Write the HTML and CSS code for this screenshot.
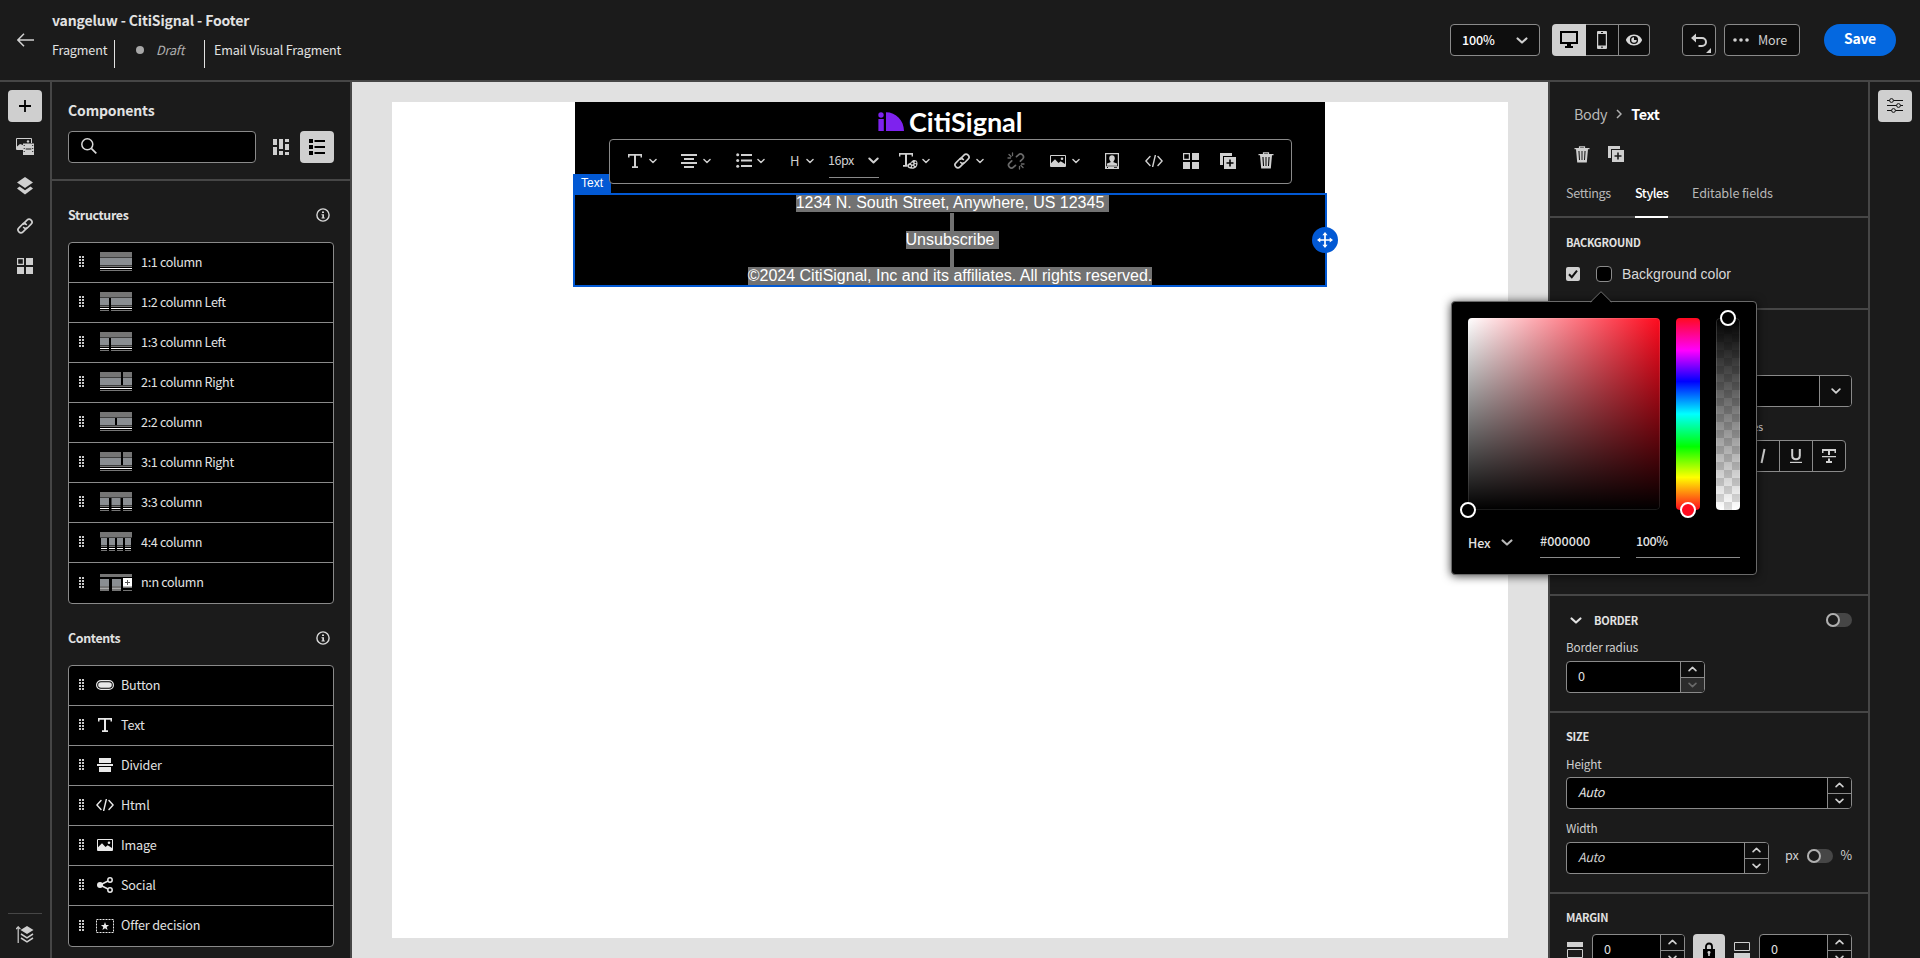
FILE: index.html
```html
<!DOCTYPE html>
<html lang="en">
<head>
<meta charset="utf-8">
<title>vangeluw - CitiSignal - Footer</title>
<link rel="stylesheet" href="styles.css">
</head>
<body>
<svg class="defs" width="0" height="0">
  <defs>
    <symbol id="handle" viewBox="0 0 5 11"><path fill="currentColor" d="M0 0h2v2H0zM3 0h2v2H3zM0 3h2v2H0zM3 3h2v2H3zM0 6h2v2H0zM3 6h2v2H3zM0 9h2v2H0zM3 9h2v2H3z"/></symbol>
    <symbol id="chev" viewBox="0 0 10 6"><path d="M1.2 1.2 5 4.8 8.800 1.200" fill="none" stroke="currentColor" stroke-width="1.8" stroke-linecap="round" stroke-linejoin="round"/></symbol>
    <symbol id="info" viewBox="0 0 14 14"><circle cx="7" cy="7" r="6.100" fill="none" stroke="currentColor" stroke-width="1.400"/><path d="M6 3.400h2v1.600H6zM5.500 6.200H8v3.200h.8v1H5.500v-1h.8V7.200h-.8z" fill="currentColor"/></symbol>
    <symbol id="link" viewBox="0 0 18 18"><g fill="none" stroke="currentColor" stroke-width="1.700" stroke-linecap="round"><path d="M7.300 6.900 11 3.100a2.900 2.900 0 0 1 4.100 0 2.900 2.900 0 0 1 0 4.100l-3.300 3.300a2.900 2.900 0 0 1-4.100 0"/><path d="M10.700 11.100 7 14.900a2.900 2.900 0 0 1-4.100 0 2.900 2.900 0 0 1 0-4.100l3.300-3.300a2.900 2.900 0 0 1 4.100 0"/></g></symbol>
    <symbol id="unlink" viewBox="0 0 18 18"><g fill="none" stroke="currentColor" stroke-width="1.700" stroke-linecap="round"><path d="M9.500 4.700 11.500 2.900a2.900 2.900 0 0 1 4.100 4.100l-2.200 2.200M8.500 13.300l-2 1.900a2.900 2.900 0 0 1-4.100-4.100l2.300-2.200"/><path stroke-width="1.300" d="M2 2.500 4 4.500M5.500 1v2.500M1 6h2.500M16 15.500l-2-2M12.500 17v-2.500M17 12h-2.500"/></g></symbol>
    <symbol id="grid4" viewBox="0 0 16 16"><path fill="currentColor" d="M9 0h7v7H9zM0 9h7v7H0zM9 9h7v7H9z"/><path d="M.6.600h5.800v5.800H.6z" fill="none" stroke="currentColor" stroke-width="1.200"/></symbol>
    <symbol id="image" viewBox="0 0 16 12"><path d="M.5.500h15v11H.5z" fill="none" stroke="currentColor"/><path fill="currentColor" d="M1 8.200 5 4.300 8.500 8l2.200-1.800L15 9v2.500H1z"/><circle cx="12" cy="3.700" r="1.300" fill="currentColor"/></symbol>
    <symbol id="code" viewBox="0 0 18 12"><path d="M5 1.600.9 6 5 10.400M13 1.600 17.100 6 13 10.400M10.300.500 7.700 11.500" fill="none" stroke="currentColor" stroke-width="1.400" stroke-linecap="round" stroke-linejoin="round"/></symbol>
    <symbol id="type" viewBox="0 0 14 14"><path fill="currentColor" d="M0 0h14v3.500h-1.500V1.800H8v10.400h2V14H4v-1.800h2V1.800H1.500v1.700H0z"/></symbol>
    <symbol id="trash" viewBox="0 0 16 17"><path d="M5.500 2V.800h5V2" fill="none" stroke="currentColor" stroke-width="1.200"/><path fill="currentColor" fill-rule="evenodd" d="M.5 2h15v1.200H14L12.800 16.500H3.200L2 3.200H.5zM4.400 5l.6 9h1l-.5-9zm3.100 0v9h1V5zm3 0-.5 9h1l.6-9z"/></symbol>
    <symbol id="copy" viewBox="0 0 16 16"><path fill="currentColor" d="M0 0h12v3H3v9H0z"/><path fill="currentColor" fill-rule="evenodd" d="M4 4h12v12H4zm5.200 2.500v2.700H6.500v1.600h2.700v2.700h1.600v-2.700h2.700V9.200h-2.700V6.500z"/></symbol>
    <symbol id="profile" viewBox="0 0 14 16"><path fill="currentColor" fill-rule="evenodd" d="M0 0h14v16H0zM1.200 1.200v12h11.600v-12zM2 14h1v1H2zm7 0h3v.7H9z"/><path fill="currentColor" d="M7 2.200c1.700 0 2.800 1.200 2.800 3 0 1.300-.6 2.400-1.300 3v1l3.500 1.300v2.200H2v-2.200l3.500-1.300v-1c-.7-.6-1.300-1.700-1.300-3 0-1.800 1.100-3 2.800-3z"/></symbol>
    <symbol id="s11" viewBox="0 0 32 19"><path fill="#757575" d="M0 0h32v5H0zM0 14h32v1H0zM0 18h32v1H0z"/><path fill="#3e3e3e" d="M0 5h32v1H0zM0 13h32v1H0z"/><path fill="#8a8e92" d="M0 6h32v7H0z"/><path fill="#fff" d="M0 16h32v1H0z"/></symbol>
  </defs>
</svg>

<div class="app">
  <header class="top">
    <svg class="back" width="17" height="14" viewBox="0 0 17 14"><path d="M7 .8.900 7 7 13.200M1 7h16" fill="none" stroke="#d0d0d0" stroke-width="1.500"/></svg>
    <div class="titles">
      <h1>vangeluw - CitiSignal - Footer</h1>
      <div class="meta"><span class="m1">Fragment</span><span class="m2"><i class="dot"></i><em>Draft</em></span><span class="m3">Email Visual Fragment</span></div>
    </div>
    <div class="tools">
      <div class="box zoom"><span>100%</span><svg width="12" height="7"><use href="#chev"/></svg></div>
      <div class="views">
        <div class="v on"><svg width="18" height="18" viewBox="0 0 18 18"><path fill="#000" fill-rule="evenodd" d="M0 0h18v13h-7v2h2v2H5v-2h2v-2H0zM2 2v9h14V2z"/></svg></div>
        <div class="v"><svg width="10" height="18" viewBox="0 0 10 18"><path fill="#d0d0d0" fill-rule="evenodd" d="M1 0h8q1 0 1 1v16q0 1-1 1H1q-1 0-1-1V1q0-1 1-1zM1.200 3v11.500h7.600V3zM4 1v1h2V1zm1 14.400a.8.800 0 1 0 .01 0z"/></svg></div>
        <div class="v"><svg width="16" height="12" viewBox="0 0 16 12"><path fill="#d8d8d8" fill-rule="evenodd" d="M8 .5c4.500 0 8 3.700 8 5.500s-3.500 5.500-8 5.500S0 7.800 0 6 3.500.500 8 .5zM8 1.900a4.100 4.100 0 1 0 0 8.200 4.100 4.100 0 0 0 0-8.200z"/><path fill="#d8d8d8" d="M8 3.300a2.700 2.700 0 1 0 2.700 2.700H8z"/></svg></div>
      </div>
      <div class="box undo"><svg width="22" height="20" viewBox="0 0 22 20"><path d="M3 5h9a4 4 0 0 1 0 8H8.500" fill="none" stroke="#d0d0d0" stroke-width="2"/><path fill="#d0d0d0" d="M1 5l5-4.500v9zM21 15v5h-5z"/></svg></div>
      <div class="box more"><svg width="16" height="4"><g fill="#d0d0d0"><circle cx="2" cy="2" r="1.800"/><circle cx="8" cy="2" r="1.800"/><circle cx="14" cy="2" r="1.800"/></g></svg><span>More</span></div>
      <div class="save">Save</div>
    </div>
  </header>

  <nav class="rail">
    <div class="rbtn"><svg width="12" height="12" viewBox="0 0 12 12"><path stroke="#000" stroke-width="1.800" d="M6 0v12M0 6h12"/></svg></div>
    <svg width="18" height="17" viewBox="0 0 18 17"><path fill="none" stroke="#cfcfcf" d="M6 11.500H.5V.500h15V5"/><path fill="#cfcfcf" d="M1 8.500 4 6l3 1v5H1z"/><circle cx="12" cy="3.400" r="1.200" fill="#cfcfcf"/><path fill="#cfcfcf" fill-rule="evenodd" d="M7 5.500h11V17H7zM7.700 7v1h1V7zm0 3v1h1v-1zm0 3v1h1v-1zM16.200 7v1h1V7zm0 3v1h1v-1zm0 3v1h1v-1zM9.700 10.500v1h5.600v-1z"/></svg>
    <svg width="16" height="18" viewBox="0 0 16 18"><path fill="#cfcfcf" d="M8 0l8 5.500-8 5.500-8-5.500zM2.500 9.500 8 13.200l5.500-3.700L16 11.500 8 17.500 0 11.500z"/></svg>
    <svg class="lt" width="18" height="18"><use href="#link"/></svg>
    <svg class="lt" width="16" height="16"><use href="#grid4"/></svg>
    <div class="railfoot"><svg width="18" height="18" viewBox="0 0 18 18"><path d="M2.200 2v15M0 3.200l2.200-2.400 2.200 2.400" fill="none" stroke="#cfcfcf" stroke-width="1.200"/><path fill="#cfcfcf" d="M11 0l6.500 4-6.500 4-6.500-4z"/><path fill="none" stroke="#cfcfcf" stroke-width="1.500" d="M5 8l6 3.800L17 8M5 12l6 3.800 6-3.800"/></svg></div>
  </nav>

  <aside class="left">
    <div class="lhead">
      <h2>Components</h2>
      <div class="srow">
        <div class="search"><svg width="16" height="16" viewBox="0 0 16 16"><circle cx="6.300" cy="6.300" r="5.500" fill="none" stroke="#d8d8d8" stroke-width="1.500"/><path d="M10.300 10.300 15.300 15.300" stroke="#d8d8d8" stroke-width="1.700"/></svg></div>
        <svg class="gal" width="16" height="16" viewBox="0 0 16 16"><path fill="#cfcfcf" d="M0 0h4v6H0zM0 8h4v8H0zM6 0h4v10H6zM6 12h4v4H6zM12 0h4v3h-4zM12 5h4v6h-4zM12 13h4v3h-4z"/></svg>
        <div class="lbtn"><svg width="16" height="16" viewBox="0 0 16 16"><path fill="#000" d="M0 0h4v4H0zM0 6h4v4H0zM0 12h4v4H0zM5.500 1H16v2H5.500zM5.500 7H16v2H5.500zM5.500 13H16v2H5.500z"/></svg></div>
      </div>
    </div>
    <div class="lsec"><h3>Structures</h3><svg width="14" height="14"><use href="#info"/></svg></div>
    <div class="list st">
      <div class="row"><svg class="h"><use href="#handle"/></svg><svg class="s" viewBox="0 0 32 19"><use href="#s11"/></svg><span class="nm">1:1 column</span></div>
      <div class="row"><svg class="h"><use href="#handle"/></svg><svg class="s" viewBox="0 0 32 19"><use href="#s11"/><path d="M9 6h2v13H9z"/></svg><span class="nm">1:2 column Left</span></div>
      <div class="row"><svg class="h"><use href="#handle"/></svg><svg class="s" viewBox="0 0 32 19"><use href="#s11"/><path d="M9 6h2v13H9z"/></svg><span class="nm">1:3 column Left</span></div>
      <div class="row"><svg class="h"><use href="#handle"/></svg><svg class="s" viewBox="0 0 32 19"><use href="#s11"/><path d="M21 0h2v13h-2z"/></svg><span class="nm">2:1 column Right</span></div>
      <div class="row"><svg class="h"><use href="#handle"/></svg><svg class="s" viewBox="0 0 32 19"><use href="#s11"/><path d="M15 6h2v7h-2z"/></svg><span class="nm">2:2 column</span></div>
      <div class="row"><svg class="h"><use href="#handle"/></svg><svg class="s" viewBox="0 0 32 19"><use href="#s11"/><path d="M21 0h2v13h-2z"/></svg><span class="nm">3:1 column Right</span></div>
      <div class="row"><svg class="h"><use href="#handle"/></svg><svg class="s" viewBox="0 0 32 19"><use href="#s11"/><path d="M9 6h2.500v13H9zM20.500 6H23v13h-2.500z"/></svg><span class="nm">3:3 column</span></div>
      <div class="row"><svg class="h"><use href="#handle"/></svg><svg class="s" viewBox="0 0 32 19"><use href="#s11"/><path d="M0 6h1v13H0zM7 6h2v13H7zM15 6h2v13h-2zM23 6h2v13h-2zM31 6h1v13h-1z"/></svg><span class="nm">4:4 column</span></div>
      <div class="row"><svg class="h"><use href="#handle"/></svg><svg class="s" viewBox="0 0 32 19"><path fill="#757575" d="M0 1h32v3H0zM0 12h9v5H0zM12 12h9v5h-9zM23 13h9v2h-9zM23 17h9v1h-9zM0 17h9v1H0zM12 17h9v1h-9z"/><path fill="#8a8e92" d="M0 6h9v7H0zM12 6h9v7h-9z"/><path fill="#fff" d="M23 5h9v8.500h-9z"/><path stroke="#555" d="M27.500 7v5M25 9.500h5"/><path fill="#aaa" d="M0 15h9v1H0zM12 15h9v1h-9z"/></svg><span class="nm">n:n column</span></div>
    </div>
    <div class="lsec"><h3>Contents</h3><svg width="14" height="14"><use href="#info"/></svg></div>
    <div class="list ct">
      <div class="row"><svg class="h"><use href="#handle"/></svg><span class="ic"><svg width="18" height="10" viewBox="0 0 18 10"><rect x=".6" y=".6" width="16.800" height="8.800" rx="4.400" fill="none" stroke="#e8e8e8" stroke-width="1.200"/><rect x="2.200" y="2.200" width="13.600" height="5.600" rx="2.800" fill="#e8e8e8"/></svg></span><span class="nm">Button</span></div>
      <div class="row"><svg class="h"><use href="#handle"/></svg><span class="ic"><svg width="14" height="14"><use href="#type"/></svg></span><span class="nm">Text</span></div>
      <div class="row"><svg class="h"><use href="#handle"/></svg><span class="ic"><svg width="16" height="14" viewBox="0 0 16 14"><path fill="#e8e8e8" d="M2 0h12v5H2zM0 6h16v2H0zM2 9h12v5H2z"/></svg></span><span class="nm">Divider</span></div>
      <div class="row"><svg class="h"><use href="#handle"/></svg><span class="ic"><svg width="18" height="12"><use href="#code"/></svg></span><span class="nm">Html</span></div>
      <div class="row"><svg class="h"><use href="#handle"/></svg><span class="ic"><svg width="16" height="12"><use href="#image"/></svg></span><span class="nm">Image</span></div>
      <div class="row"><svg class="h"><use href="#handle"/></svg><span class="ic"><svg width="16" height="16" viewBox="0 0 16 16"><circle cx="3" cy="8" r="3" fill="#e8e8e8"/><g fill="none" stroke="#e8e8e8" stroke-width="1.500"><circle cx="13" cy="3" r="2.200"/><circle cx="13" cy="13" r="2.200"/><path d="M3 8l8-4M3 8l8 4"/></g></svg></span><span class="nm">Social</span></div>
      <div class="row"><svg class="h"><use href="#handle"/></svg><span class="ic"><svg width="18" height="14" viewBox="0 0 18 14"><path d="M.5.500h17v13H.5z" fill="none" stroke="#e8e8e8" stroke-dasharray="2 1"/><path fill="#e8e8e8" d="M9 3l1.100 2.900 3 .1-2.400 1.900.9 3L9 9.200l-2.600 1.700.9-3L4.900 6l3-.1z"/></svg></span><span class="nm">Offer decision</span></div>
    </div>
  </aside>

  <main class="canvas">
    <div class="page">
      <div class="mail">
        <div class="logo"><svg width="26" height="19" viewBox="0 0 26 19"><g fill="#7e22ee"><circle cx="3" cy="3" r="2.700"/><path d="M.4 7h5.400v12H.4zM8 .3C18 .3 26 8.500 26 19H8z"/></g></svg><span>CitiSignal</span></div>
        <div class="textblock">
          <span class="tag">Text</span>
          <p class="first"><mark class="nl">1234 N. South Street, Anywhere, US 12345</mark></p>
          <p><mark class="empty"></mark></p>
          <p><mark class="nl">Unsubscribe</mark></p>
          <p><mark class="empty"></mark></p>
          <p><mark>©2024 CitiSignal, Inc and its affiliates. All rights reserved.</mark></p>
          <svg class="move" width="26" height="26" viewBox="0 0 26 26"><circle cx="13" cy="13" r="13" fill="#0259d4"/><path d="M13 7v12M7 13h12" stroke="#fff" stroke-width="1.700"/><path fill="#fff" d="M13 5l2.600 3.300h-5.200zM13 21l2.600-3.300h-5.200zM5 13l3.300-2.600v5.200zM21 13l-3.300-2.600v5.200z"/></svg>
        </div>
        <div class="bar">
          <span class="t t1"><svg width="14" height="14"><use href="#type"/></svg><svg class="c"><use href="#chev"/></svg></span>
          <span class="t t2"><svg width="16" height="14" viewBox="0 0 16 14"><path fill="currentColor" d="M0 0h16v2H0zM3 4h10v2H3zM0 8h16v2H0zM3 12h10v2H3z"/></svg><svg class="c"><use href="#chev"/></svg></span>
          <span class="t t3"><svg width="16" height="15" viewBox="0 0 16 15"><path fill="currentColor" d="M5 1h11v2H5zM5 6.500h11v2H5zM5 12h11v2H5z"/><g fill="currentColor"><circle cx="1.700" cy="1.700" r="1.500"/><circle cx="1.700" cy="7.500" r="1.500"/><circle cx="1.700" cy="13.300" r="1.500"/></g></svg><svg class="c"><use href="#chev"/></svg></span>
          <span class="t t4"><b>H</b><svg class="c"><use href="#chev"/></svg></span>
          <span class="t t5"><b>16px</b><svg class="c big"><use href="#chev"/></svg></span>
          <span class="t t6"><svg width="19" height="16" viewBox="0 0 19 16"><path fill="currentColor" d="M0 0h14v3.500h-1.400V1.700H8V12h1v1.800H4V12h2V1.700H1.400v1.800H0z"/><path fill="#000" d="M8.500 9h4l2-3h4v10h-10z"/><path fill="currentColor" d="M8.300 12.500c0-2.400 3-1.800 4.200-4 1-2 5.300-2.400 5.900.9.600 3.500-1.600 6.300-5.200 6.300-2.900 0-4.900-1-4.900-3.200z"/><g fill="#000"><circle cx="11" cy="13" r="1"/><circle cx="13.800" cy="13.600" r=".9"/><circle cx="16.300" cy="12" r=".9"/><circle cx="16.500" cy="9.300" r=".9"/><circle cx="13.300" cy="10.500" r="1.100"/></g></svg><svg class="c"><use href="#chev"/></svg></span>
          <span class="t t7"><svg width="18" height="18"><use href="#link"/></svg><svg class="c"><use href="#chev"/></svg></span>
          <span class="t t8"><svg width="18" height="18"><use href="#unlink"/></svg></span>
          <span class="t t9"><svg width="16" height="12"><use href="#image"/></svg><svg class="c"><use href="#chev"/></svg></span>
          <span class="t t10"><svg width="14" height="16"><use href="#profile"/></svg></span>
          <span class="t t11"><svg width="18" height="12"><use href="#code"/></svg></span>
          <span class="t t12"><svg width="16" height="16"><use href="#grid4"/></svg></span>
          <span class="t t13"><svg width="16" height="16"><use href="#copy"/></svg></span>
          <span class="t t14"><svg width="16" height="17"><use href="#trash"/></svg></span>
        </div>
      </div>
    </div>
  </main>

  <aside class="right">
    <div class="crumb"><span>Body</span><svg width="6" height="10" viewBox="0 0 6 10"><path d="M1 1l4 4-4 4" fill="none" stroke="#b0b0b0" stroke-width="1.500"/></svg><b>Text</b></div>
    <div class="acts"><svg width="16" height="17"><use href="#trash"/></svg><svg width="16" height="16"><use href="#copy"/></svg></div>
    <div class="tabs"><span class="tab a">Settings</span><span class="tab on">Styles</span><span class="tab b">Editable fields</span></div>
    <section class="bg">
      <h4>BACKGROUND</h4>
      <div class="bgrow"><svg width="14" height="14" viewBox="0 0 14 14"><rect width="14" height="14" rx="2" fill="#d0d0d0"/><path d="M3 7.200l2.800 3L11 3.700" fill="none" stroke="#111" stroke-width="2"/></svg><i class="sw"></i><span>Background color</span></div>
    </section>
    <section class="txt">
      <div class="select"><span></span><i><svg class="c"><use href="#chev"/></svg></i></div>
      <label>Font styles</label>
      <div class="fmt"><span></span><span><svg width="14" height="16" viewBox="0 0 14 16"><path d="M8.500 1 5.500 15" stroke="#d0d0d0" stroke-width="2"/></svg></span><span><svg width="12" height="14" viewBox="0 0 12 14"><path d="M2.200 0v6.500c0 2.500 1.500 3.700 3.800 3.700s3.800-1.200 3.800-3.700V0" fill="none" stroke="#d0d0d0" stroke-width="2"/><path d="M0 13.400h12" stroke="#d0d0d0" stroke-width="1.200"/></svg></span><span><svg width="14" height="14" viewBox="0 0 14 14"><path fill="#d0d0d0" d="M0 0h14v4h-1.500V2H8v4H6V2H1.500v2H0zM0 7h14v1.200H0zM6 9.500h2V12h2v2H4v-2h2z"/></svg></span></div>
    </section>
    <section class="bd">
      <div class="bdhead"><svg width="12" height="7"><use href="#chev"/></svg><h4>BORDER</h4><i class="tog"></i></div>
      <label>Border radius</label>
      <div class="num n1"><span>0</span><i><b><svg class="u"><use href="#chev"/></svg></b><b class="dis"><svg class="d"><use href="#chev"/></svg></b></i></div>
    </section>
    <section class="sz">
      <h4>SIZE</h4>
      <label>Height</label>
      <div class="num"><span class="it">Auto</span><i><b><svg class="u"><use href="#chev"/></svg></b><b><svg class="d"><use href="#chev"/></svg></b></i></div>
      <label class="w">Width</label>
      <div class="wrow"><div class="num n2"><span class="it">Auto</span><i><b><svg class="u"><use href="#chev"/></svg></b><b><svg class="d"><use href="#chev"/></svg></b></i></div><span class="px">px</span><i class="tog"></i><span class="pc">%</span></div>
    </section>
    <section class="mg">
      <h4>MARGIN</h4>
      <div class="mrow">
        <svg width="16" height="16" viewBox="0 0 16 16"><path fill="#d0d0d0" d="M0 0h16v5H0z"/><path d="M.5 7.500h15v8H.5z" fill="none" stroke="#d0d0d0"/></svg>
        <div class="num n3"><span>0</span><i><b><svg class="u"><use href="#chev"/></svg></b><b><svg class="d"><use href="#chev"/></svg></b></i></div>
        <div class="lock"><svg width="12" height="16" viewBox="0 0 12 16"><path d="M3 8V4.500a3 3 0 0 1 6 0V8" fill="none" stroke="#000" stroke-width="1.800"/><path fill-rule="evenodd" d="M0 7h12v9H0zm6 2a1.500 1.500 0 0 0-.8 2.800V14h1.600v-2.200A1.500 1.500 0 0 0 6 9z"/></svg></div>
        <svg class="mi" width="16" height="16" viewBox="0 0 16 16"><path d="M.5.500h15v8H.5z" fill="none" stroke="#d0d0d0"/><path fill="#d0d0d0" d="M0 11h16v5H0z"/></svg>
        <div class="num n4"><span>0</span><i><b><svg class="u"><use href="#chev"/></svg></b><b><svg class="d"><use href="#chev"/></svg></b></i></div>
      </div>
    </section>
  </aside>

  <nav class="rail rr">
    <div class="rbtn"><svg width="16" height="16" viewBox="0 0 16 16"><path stroke="#111" d="M0 2.500h16M0 7.500h16M0 12.500h16"/><g fill="#d0d0d0" stroke="#111"><circle cx="4.500" cy="2.500" r="1.900"/><circle cx="11.500" cy="7.500" r="1.900"/><circle cx="6.500" cy="12.500" r="1.900"/></g></svg></div>
  </nav>
</div>

<div class="pop">
  <svg class="tip" width="22" height="12" viewBox="0 0 22 12"><path d="M0 11.500h1L11 1l10 10.500h1V12H0z"/><path d="M.5 11 11 .7 21.500 11" fill="none" stroke="#6a6a6a"/></svg>
  <div class="pickers">
    <div class="area"><i class="knob k1"></i></div>
    <div class="hue"><i class="knob k2"></i></div>
    <div class="alpha"><i class="knob k3"></i></div>
  </div>
  <div class="vals"><span class="hex">Hex<svg width="12" height="7"><use href="#chev"/></svg></span><span class="f1">#000000</span><span class="f2">100%</span></div>
</div>
</body>
</html>
```

FILE: styles.css
```css
*, *::before { box-sizing: border-box; }
body { margin: 0; width: 1920px; height: 958px; overflow: hidden; background: #1b1b1b; color: #e2e2e2; font: 12.6px/20px "Noto Sans CJK SC", "Noto Sans", sans-serif; letter-spacing: -.15px; }
h1, h2, h3, h4, p { margin: 0; }
svg { display: block; flex: none; }
i, em { flex: none; }
.defs { position: absolute; }
.app { display: grid; grid-template: 82px 876px / 52px 300px 1196px 322px 50px; width: 1920px; height: 958px; }

.top { grid-column: 1 / -1; border-bottom: 2px solid #464646; display: flex; align-items: flex-start; }
.back { margin: 33px 0 0 17px; }
.titles { margin: 9px 0 0 18px; }
h1 { font-size: 14px; line-height: 22px; font-weight: 700; letter-spacing: -.13px; white-space: nowrap; }
.meta { display: flex; height: 28px; margin-top: 9px; line-height: 20px; white-space: nowrap; }
.meta > span { display: flex; align-items: flex-start; }
.m1 { width: 63px; border-right: 1px solid #e2e2e2; }
.m2 { width: 90px; border-right: 1px solid #e2e2e2; }
.m3 { padding-left: 9px; }
.dot { width: 8px; height: 8px; border-radius: 50%; background: #a8a8a8; margin: 6px 12px 0 21px; }
.m2 em { color: #b0b0b0; }
.tools { margin-left: auto; padding: 24px 24px 0 0; display: flex; height: 56px; }
.box { height: 32px; border: 1px solid #8a8a8a; border-radius: 4px; background: #0e0e0e; display: flex; align-items: center; color: #d0d0d0; }
.zoom { width: 90px; padding: 0 11px 0 11px; justify-content: space-between; font-weight: 500; color: #fff; }
.zoom svg { color: #d0d0d0; }
.views { margin-left: 12px; height: 32px; display: flex; }
.v { width: 33px; display: flex; align-items: center; justify-content: center; border: 1px solid #8a8a8a; border-left: 0; background: #0e0e0e; }
.v.on { width: 34px; background: #cfcfcf; border: 0; border-radius: 4px 0 0 4px; }
.v:last-child { width: 31px; border-radius: 0 4px 4px 0; }
.undo { margin-left: 32px; width: 34px; justify-content: flex-end; padding: 0 3px 0 0; }
.undo svg { margin-top: 6px; }
.more { margin-left: 8px; width: 76px; padding-left: 8px; gap: 9px; }
.save { margin-left: 24px; width: 72px; height: 32px; border-radius: 16px; background: #0468e0; color: #fff; font-weight: 700; font-size: 14px; line-height: 29px; text-align: center; letter-spacing: -.3px; }

.rail { border-right: 2px solid #464646; display: flex; flex-direction: column; align-items: center; padding-top: 8px; }
.rr { border: 0; }
.rbtn { width: 34px; height: 32px; border-radius: 4px; background: #cfcfcf; display: flex; align-items: center; justify-content: center; margin-bottom: 16px; }
.rail > svg { margin-bottom: 22px; }
.rail > .lt { color: #cfcfcf; }
.rail > svg + svg + svg.lt { margin-bottom: 23px; }
.railfoot { margin-top: auto; width: 34px; height: 45px; border-top: 1px solid #464646; display: flex; justify-content: center; padding-top: 12px; }

.left { border-right: 2px solid #464646; }
.lhead { height: 99px; border-bottom: 2px solid #464646; padding: 17px 16px 0; }
h2 { font-size: 14px; line-height: 22px; font-weight: 700; }
.srow { display: flex; align-items: center; margin-top: 10px; }
.search { width: 188px; height: 32px; border: 1px solid #8a8a8a; border-radius: 4px; background: #000; padding: 6px 0 0 12px; }
.gal { margin: 0 11px 0 17px; }
.lbtn { width: 34px; height: 32px; border-radius: 4px; background: #cfcfcf; display: flex; align-items: center; justify-content: center; }
.lsec { display: flex; justify-content: space-between; align-items: center; padding: 0 20px 0 16px; height: 22px; margin: 23px 0 16px; color: #d8d8d8; }
.lsec h3 { font-size: 12.4px; font-weight: 700; line-height: 22px; color: #e2e2e2; letter-spacing: -.35px; }
.list { margin: 0 16px; border: 1px solid #8a8a8a; border-radius: 4px; background: #000; }
.row { height: 40px; border-bottom: 1px solid #8a8a8a; display: flex; align-items: center; }
.row:last-child { border: 0; }
.st .row { letter-spacing: -.35px; }
.nm { margin-top: -2px; }
.h { width: 5px; height: 11px; margin-left: 10px; color: #c8c8c8; margin-top: -2px; }
.s { width: 32px; height: 19px; margin: -2px 9px 0 16px; }
.ic { width: 30px; margin: -1px 1px 0 6px; display: flex; justify-content: center; color: #e8e8e8; }

.canvas { background: #e1e1e1; padding: 20px 40px; }
.page { background: #fff; height: 836px; padding-left: 183px; }
.mail { width: 750px; position: relative; padding-top: 10px; background: #000; height: 184px; }
.logo { display: flex; margin-left: 303px; gap: 5px; height: 81px; }
.logo span { font: 700 27px/20px Lato, sans-serif; color: #fff; letter-spacing: 0; }
.textblock { position: relative; margin: 0 -2px; border: 2px solid #0259d4; height: 94px; background: #000; text-align: center; font: 16px/18px "Liberation Sans", Arial, sans-serif; color: #fff; letter-spacing: 0; }
.textblock p { height: 18px; }
.textblock mark { display: inline-block; background: #727272; color: #fff; height: 18px; white-space: nowrap; vertical-align: top; }
.textblock .first mark { height: 17px; line-height: 16px; }
.textblock mark.nl { box-shadow: 5px 0 0 #727272; }
.textblock mark.empty { width: 4px; margin-left: 4px; }
.tag { position: absolute; left: -2px; top: -21px; width: 38px; height: 19px; background: #0259d4; font: 12px/18px "Liberation Sans", Arial, sans-serif; }
.move { position: absolute; right: -13px; top: 32px; }
.bar { position: absolute; left: 34px; top: 37px; width: 683px; height: 45px; border: 1px solid #8a8a8a; border-radius: 4px; background: #000; color: #d0d0d0; display: flex; align-items: center; padding-bottom: 2px; }
.t { display: flex; align-items: center; gap: 7px; height: 34px; flex: none; }
.t b { font-weight: 400; }
.c { width: 10px; height: 6px; }
.t .c { width: 8px; height: 6px; overflow: visible; }
.t .c.big { width: 11px; height: 7px; }
.t1 { margin-left: 18px; } .t2 { margin-left: 24px; gap: 6px; } .t3 { margin-left: 25px; gap: 5px; }
.t4 { margin-left: 25px; width: 24px; justify-content: space-between; gap: 0; } .t4 b { font-size: 13px; }
.t5 { margin-left: 15px; width: 50px; border-bottom: 1px solid #8a8a8a; justify-content: space-between; gap: 0; letter-spacing: -.5px; }
.t5 b { margin-left: -1px; }
.t6 { margin-left: 20px; gap: 4px; } .t7 { margin-left: 23px; gap: 5px; } .t8 { margin-left: 23px; color: #6a6a6a; }
.t9 { margin-left: 25px; gap: 6px; } .t10 { margin-left: 25px; } .t11 { margin-left: 26px; } .t12 { margin-left: 20px; } .t13 { margin-left: 21px; } .t14 { margin-left: 22px; }

.right { border-left: 2px solid #464646; border-right: 2px solid #464646; overflow: hidden; }
.crumb { display: flex; align-items: center; padding: 0 24px; height: 24px; margin-top: 20px; font-size: 14.4px; color: #b8b8b8; gap: 9px; letter-spacing: -.35px; }
.crumb b { color: #fff; font-weight: 700; }
.acts { display: flex; gap: 18px; padding-left: 24px; margin-top: 20px; color: #cfcfcf; height: 17px; }
.tabs { display: flex; padding: 20px 0 0 16px; height: 55px; border-bottom: 2px solid #464646; color: #b8b8b8; }
.tab { height: 35px; white-space: nowrap; }
.tab.on { border-bottom: 2px solid #fff; color: #fff; font-weight: 500; margin: 0 24px; width: 33px; letter-spacing: -.45px; }
.tab.a { width: 45px; letter-spacing: -.35px; }
section { border-bottom: 2px solid #464646; padding: 0 16px; }
h4 { font-size: 11px; line-height: 16px; font-weight: 700; letter-spacing: -.25px; }
label { display: block; font-size: 11.8px; line-height: 16px; color: #d0d0d0; letter-spacing: -.2px; }
.bg { height: 92px; padding-top: 16px; }
.bgrow { display: flex; align-items: center; margin-top: 15px; font: 14px/18px "Liberation Sans", Arial, sans-serif; color: #d8d8d8; letter-spacing: 0; }
.bgrow span { white-space: nowrap; margin-left: 10px; }
.sw { width: 16px; height: 16px; border: 1px solid #8a8a8a; border-radius: 4px; background: #000; margin-left: 16px; }
.txt { height: 286px; padding-top: 65px; }
.select { height: 32px; border: 1px solid #8a8a8a; border-radius: 4px; background: #000; display: flex; justify-content: flex-end; }
.select i { width: 32px; border-left: 1px solid #8a8a8a; background: #0e0e0e; display: flex; align-items: center; justify-content: center; color: #d0d0d0; border-radius: 0 3px 3px 0; }
.txt label { margin: 11px 0 6px; width: 197px; text-align: right; line-height: 16px; font-size: 11px; }
.fmt { margin-left: 148px; width: 132px; height: 32px; border: 1px solid #8a8a8a; border-radius: 4px; background: #0e0e0e; display: flex; }
.fmt span { width: 33px; border-right: 1px solid #8a8a8a; display: flex; align-items: center; justify-content: center; flex: none; }
.fmt span:first-child { width: 32px; }
.fmt span:last-child { border: 0; width: 32px; }
.bd { height: 117px; padding-top: 16px; }
.bdhead { display: flex; align-items: center; height: 16px; padding-left: 4px; }
.bdhead h4 { margin: -1px 0 0 12px; flex: 1; }
.tog { width: 26px; height: 14px; border-radius: 7px; background: #464646; position: relative; }
.tog::before { content: ""; position: absolute; left: 0; top: 0; width: 14px; height: 14px; border-radius: 50%; border: 2px solid #b0b0b0; background: #1b1b1b; }
.bd label { margin: 11px 0 6px; }
.num { height: 32px; border: 1px solid #8a8a8a; border-radius: 4px; background: #000; display: flex; overflow: hidden; line-height: 28px; flex: none; }
.num span { flex: 1; padding-left: 11px; }
.num .it { font-style: italic; letter-spacing: -.3px; }
.num i { width: 24px; border-left: 1px solid #8a8a8a; display: flex; flex-direction: column; background: #0e0e0e; color: #d0d0d0; }
.num b { height: 15px; display: flex; align-items: center; justify-content: center; }
.num b:first-child { border-bottom: 1px solid #8a8a8a; height: 16px; }
.num svg { width: 9px; height: 6px; }
.u { transform: rotate(180deg); }
.dis { background: #2c2c2c; color: #6a6a6a; }
.n1 { width: 139px; }
.n2 { width: 203px; }
.sz { height: 181px; padding-top: 15px; }
.sz label { margin: 12px 0 5px; }
.sz label.w { margin: 11px 0 6px; }
.wrow { display: flex; align-items: center; color: #d0d0d0; }
.px { margin: -6px 8px 0 16px; width: 14px; }
.pc { margin: -6px 0 0 8px; }
.wrow .tog { margin-top: -4px; }
.mg { height: 200px; padding-top: 15px; }
.mrow { display: flex; align-items: center; margin: 9px 0 0 1px; }
.n3 { width: 93px; margin-left: 9px; }
.lock { width: 32px; height: 32px; border-radius: 4px; background: #cfcfcf; margin: 0 9px 0 8px; display: flex; align-items: center; justify-content: center; flex: none; }
.n4 { width: 93px; margin-left: 9px; }

.pop { position: absolute; left: 1451px; top: 301px; width: 306px; height: 274px; background: #000; border: 1px solid #6a6a6a; border-radius: 4px; box-shadow: 0 1px 10px rgba(0,0,0,.75); padding: 16px; }
.tip { position: absolute; left: 138px; top: -11px; }
.pickers { display: flex; gap: 16px; }
.area, .hue, .alpha { position: relative; height: 192px; border-radius: 4px; width: 24px; }
.area { width: 192px; background: linear-gradient(to top, #000, transparent), linear-gradient(to right, #fff, #ff0a1e); box-shadow: inset 0 0 0 1px rgba(255,255,255,.1); }
.hue { background: linear-gradient(to bottom, #ff0a1e 0%, #f0f 17%, #00f 33%, #0ff 50%, #0f0 67%, #ff0 83%, #ff0a1e 100%); }
.alpha { background: linear-gradient(to bottom, #000, transparent), repeating-conic-gradient(#fff 0 25%, #dcdcdc 0 50%) 0 0 / 16px 16px; box-shadow: inset 0 0 0 1px rgba(255,255,255,.15); }
.knob { position: absolute; width: 16px; height: 16px; border: 2px solid #fff; border-radius: 50%; background: #000; }
.k1 { left: -8px; bottom: -8px; } .k2 { left: 4px; bottom: -8px; background: #ff0a1e; } .k3 { left: 4px; top: -8px; }
.vals { display: flex; margin-top: 16px; height: 32px; line-height: 29px; font-weight: 500; letter-spacing: -.2px; }
.vals svg { color: #b8b8b8; margin-left: 11px; }
.hex { display: flex; align-items: center; width: 72px; }
.f1 { width: 80px; border-bottom: 1px solid #8a8a8a; letter-spacing: 0; }
.f2 { width: 104px; margin-left: 16px; border-bottom: 1px solid #8a8a8a; letter-spacing: -.4px; }
```
